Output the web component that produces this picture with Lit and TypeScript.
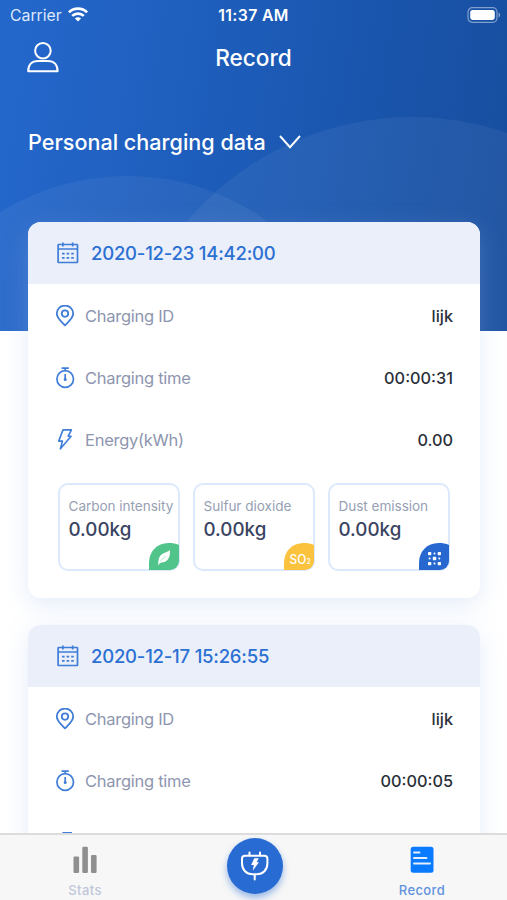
import { LitElement, html, svg, css } from "lit";
import { customElement, property } from "lit/decorators.js";

const icons = {
  calendar: svg`<svg width="22" height="22" viewBox="0 0 22 22" fill="none" stroke="#3f7dd8" stroke-width="1.7">
    <rect x="1.1" y="2.5" width="19.4" height="18" rx=".6"/><path d="M1 7h19.6M5.9 .4v4M15.7 .4v4"/>
    <path d="M5 11.6h2.6M9.6 11.6h2.6M14.2 11.6h2.6M5 15.8h2.6M9.6 15.8h2.6M14.2 15.8h2.6" stroke-width="1.7"/></svg>`,
  pin: svg`<svg width="20" height="22" viewBox="0 0 20 22" fill="none" stroke="#3f7dd8" stroke-width="1.8">
    <path d="M10 20.4C7 17.2 1.8 13.4 1.8 8.6a8.2 8 0 0 1 16.4 0C18.2 13.4 13 17.2 10 20.4z" stroke-linejoin="round"/><circle cx="10" cy="8.6" r="3.2"/></svg>`,
  timer: svg`<svg width="20" height="22" viewBox="0 0 20 22" fill="none" stroke="#3f7dd8" stroke-width="1.7">
    <circle cx="10.2" cy="12" r="8.3"/><path d="M6.6 1.1h7.2M10.2 1.1v2.7M10.2 7v5"/><circle cx="10.2" cy="12.4" r="1.5" fill="#3f7dd8" stroke="none"/></svg>`,
  bolt: svg`<svg width="20" height="22" viewBox="0 0 20 22" fill="none" stroke="#3f7dd8" stroke-width="1.6" stroke-linejoin="round">
    <path d="M8 .9h8.4L13.2 7.2h2.9L5.4 19.8l2-7.7H3.7z"/></svg>`,
};

@customElement("metric-tile")
class MetricTile extends LitElement {
  @property() label = "";
  @property() kind = "leaf";
  static styles = css`
    :host { display: block; box-sizing: border-box; width: 122px; height: 88px; border: 2px solid #dce9fc; border-radius: 10px; position: relative; padding: 12px 0 0 9px; white-space: nowrap; }
    .label { font-size: 13.6px; line-height: 18px; color: #979fb4; letter-spacing: -0.05px; }
    .value { font-size: 18.8px; line-height: 25px; margin-top: 2px; color: #3a4462; font-weight: 500; }
    .badge { position: absolute; right: -1.5px; bottom: -1px; }
    svg { display: block; }
    .so { font: 500 12.5px Inter, sans-serif; }
    .sub { font: 500 7px Inter, sans-serif; }
  `;
  render() {
    const fill = { leaf: "#50c48b", so: "#fbc23d", dust: "#2668d0" }[this.kind];
    const art = {
      leaf: svg`<path d="M9.4 22.8C9 17 9.800 13 14 10.600c2.600-1.500 4.700-1.400 6.800-3.600.6 5.500-.8 9.300-4 11.200-1.900 1.100-3.600 1-5 1.500-1.100.5-1.800 1.400-2.400 3.100z" fill="#fff"/><path d="M11 18.600l5.400-5.600" stroke="#50c48b" stroke-width=".5"/>`,
      so: svg`<text class="so" x="5.500" y="21" fill="#fff" textLength="16.800" lengthAdjust="spacingAndGlyphs">SO</text><text class="sub" x="22.600" y="21.300" fill="#fff">2</text>`,
      dust: svg`<g fill="#fff"><rect x="9" y="9" width="3.300" height="3.300" rx=".8"/><rect x="18.700" y="9" width="3.300" height="3.300" rx=".8"/><rect x="13.800" y="13.800" width="3.400" height="3.400" rx=".8"/><rect x="9" y="18.900" width="3.300" height="3.300" rx=".8"/><rect x="18.700" y="18.900" width="3.300" height="3.300" rx=".8"/><circle cx="15.500" cy="10.600" r="1"/><circle cx="10.600" cy="15.500" r="1"/><circle cx="20.300" cy="15.500" r="1"/><circle cx="15.500" cy="20.600" r="1"/></g>`,
    }[this.kind];
    return html`<div class="label">${this.label}</div><div class="value">0.00kg</div>
      <svg class="badge" width="30" height="27" viewBox="0 0 30 27"><path d="M0 27V20C0 8.500 8 0 19.500 0c4 0 7.500.6 10.500 2v16a9 9 0 0 1-9 9z" fill=${fill}/>${art}</svg>`;
  }
}

@customElement("record-card")
class RecordCard extends LitElement {
  @property() date = "";
  @property() time = "";
  @property({ type: Boolean }) emissions = false;
  static styles = css`
    :host { display: block; height: 376px; flex: none; border-radius: 13px; background: #fff; overflow: hidden; box-shadow: 0 7px 24px rgba(150, 180, 232, 0.26); color: #2a2f38; }
    .head { height: 62px; background: #eaeff9; display: flex; align-items: center; padding-left: 29px; gap: 12px; color: #2b70d3; font-size: 18.5px; font-weight: 500; white-space: nowrap; letter-spacing: -0.22px; }
    .row { height: 62px; display: flex; align-items: center; padding: 2px 27px 0 27px; box-sizing: border-box; }
    .row .name { margin-left: 10px; flex: 1; font-size: 16.5px; color: #8e96af; letter-spacing: -0.27px; }
    .row .val { font-size: 16.3px; font-weight: 500; }
    .tiles { display: flex; gap: 13px; padding: 13px 0 0 29.5px; }
    .head svg, .row svg { display: block; flex: none; }
  `;
  render() {
    const row = (icon: unknown, name: string, val: string) =>
      html`<div class="row">${icon}<span class="name">${name}</span><span class="val">${val}</span></div>`;
    return html`<div class="head">${icons.calendar}<span>${this.date}</span></div>
      ${row(icons.pin, "Charging ID", "lijk")}
      ${row(icons.timer, "Charging time", this.time)}
      ${row(icons.bolt, "Energy(kWh)", "0.00")}
      ${this.emissions ? html`<div class="tiles">
        <metric-tile label="Carbon intensity" kind="leaf"></metric-tile>
        <metric-tile label="Sulfur dioxide" kind="so"></metric-tile>
        <metric-tile label="Dust emission" kind="dust"></metric-tile>
      </div>` : ""}`;
  }
}

@customElement("app-root")
class AppRoot extends LitElement {
  static styles = css`
    :host { display: block; position: relative; height: 900px; overflow: hidden; background: #fff; font-family: Inter, sans-serif; }
    .backdrop { position: absolute; left: 0; top: 0; display: block; }
    .content { position: relative; height: 833px; overflow: hidden; }
    .status { height: 30px; display: grid; grid-template-columns: 1fr auto 1fr; align-items: center; color: #fff; padding: 0 10px; font-size: 15.8px; box-sizing: border-box; }
    .carrier { display: flex; align-items: center; gap: 6px; color: #dce8fb; }
    .carrier svg { margin-top: -2px; }
    .clock { font-weight: 600; font-size: 15.8px; letter-spacing: 0.35px; }
    .battery { justify-self: end; margin: -1px -4px 0 0; }
    .nav { height: 55px; display: grid; grid-template-columns: 1fr auto 1fr; align-items: center; padding: 0 26px; color: #fff; font-size: 22.6px; font-weight: 500; }
    .filter { height: 113px; display: flex; align-items: center; padding-left: 28px; gap: 13px; color: #fff; font-size: 21.6px; font-weight: 500; }
    .cards { display: flex; flex-direction: column; gap: 27px; padding: 24px 27px 0 28px; }
    .tabs { position: relative; height: 67px; box-sizing: border-box; border-top: 2px solid #dcdcdd; background: #f7f7f7; display: grid; grid-template-columns: 170px 1fr 170px; font-size: 13px; font-weight: 500; letter-spacing: 0.4px; }
    .tab { display: flex; flex-direction: column; align-items: center; gap: 8px; padding-top: 10px; color: #c0c7da; line-height: 18px; }
    .tab.on { color: #6192de; }
    .plug { justify-self: center; margin: 3px 0 0 2px; width: 56px; height: 56px; border-radius: 50%; background: #286bd2; box-shadow: 0 4px 7px rgba(36, 104, 208, 0.45); }
    svg { display: block; }
  `;
  render() {
    return html`
      <svg class="backdrop" width="507" height="331" viewBox="0 0 507 331">
        <defs><linearGradient id="g" gradientUnits="userSpaceOnUse" x1="0" y1="110" x2="510" y2="190">
          <stop offset="0" stop-color="#2467cb"/><stop offset=".55" stop-color="#1b59b4"/><stop offset="1" stop-color="#174e9f"/></linearGradient></defs>
        <rect width="507" height="331" fill="url(#g)"/>
        <circle cx="412" cy="412" r="295" fill="#fff" fill-opacity=".055"/>
        <circle cx="127" cy="416" r="240" fill="#fff" fill-opacity=".055"/>
      </svg>
      <div class="content">
        <div class="status">
          <span class="carrier">Carrier <svg width="20" height="15" viewBox="0 0 20 15" fill="none" stroke="#fff" stroke-width="2.700">
            <path d="M.9 5.400a13 13 0 0 1 18.200 0M4.200 8.900a8.300 8.300 0 0 1 11.600 0"/><path d="M10 14.600L6.900 11.500a4.400 4.400 0 0 1 6.200 0z" fill="#fff" stroke="none"/></svg></span>
          <span class="clock">11:37 AM</span>
          <svg class="battery" width="34" height="16" viewBox="0 0 34 16"><rect x="1" y=".7" width="29" height="14.600" rx="4.300" fill="none" stroke="#fff" stroke-opacity=".45" stroke-width="1.200"/><rect x="3.200" y="3" width="24.600" height="10" rx="2.400" fill="#fff"/><path d="M31.600 5.600a2.600 2.600 0 0 1 0 4.800z" fill="#fff" fill-opacity=".5"/></svg>
        </div>
        <div class="nav">
          <svg width="34" height="32" viewBox="0 0 34 32" fill="none" stroke="#fff" stroke-width="2"><circle cx="16.900" cy="8.800" r="7.800"/><path d="M2.200 29.300c0-6.200 3.500-10.400 9.700-10.400h10c6.200 0 9.700 4.200 9.700 10.400z" stroke-linejoin="round"/></svg>
          <span class="title">Record</span><span></span>
        </div>
        <div class="filter"><span>Personal charging data</span>
          <svg width="22" height="14" viewBox="0 0 22 14" fill="none" stroke="#fff" stroke-width="1.900"><path d="M1 1l10 11.200L21 1"/></svg></div>
        <div class="cards">
          <record-card date="2020-12-23 14:42:00" time="00:00:31" emissions></record-card>
          <record-card date="2020-12-17 15:26:55" time="00:00:05"></record-card>
        </div>
      </div>
      <div class="tabs">
        <div class="tab"><svg width="26" height="28" viewBox="0 0 26 28" fill="#8f8f8f"><rect x="1.500" y="11.400" width="5.600" height="16.500" rx="1.200"/><rect x="10.300" y="1.700" width="5.600" height="26.200" rx="1.200"/><rect x="19" y="10" width="5.600" height="17.900" rx="1.200"/></svg>Stats</div>
        <div class="plug"><svg width="56" height="56" viewBox="0 0 56 56" fill="none" stroke="#fff" stroke-width="2" stroke-linecap="round"><path d="M18 17.700h19.400c2 0 3 1 3 3v4.500c0 7-4.500 11-10.500 11h-4.400c-6 0-10.500-4-10.500-11v-4.500c0-2 1-3 3-3zM22.500 14.500v3M33 14.500v3M27.700 36.500v5"/><path d="M27.300 20.300h4.400l-2 4h2.300l-6.200 8.400 1-5.600h-2.700z" fill="#fff" stroke="none"/></svg></div>
        <div class="tab on"><svg width="24" height="28" viewBox="0 0 24 28"><rect x=".7" y="1.700" width="22.800" height="26" rx="2.500" fill="#0a7bff"/><path d="M4 7.500h5.500M4 13h12.500M4 18.500h16" stroke="#e4f0ff" stroke-width="1.900" stroke-linecap="round"/></svg>Record</div>
      </div>`;
  }
}
